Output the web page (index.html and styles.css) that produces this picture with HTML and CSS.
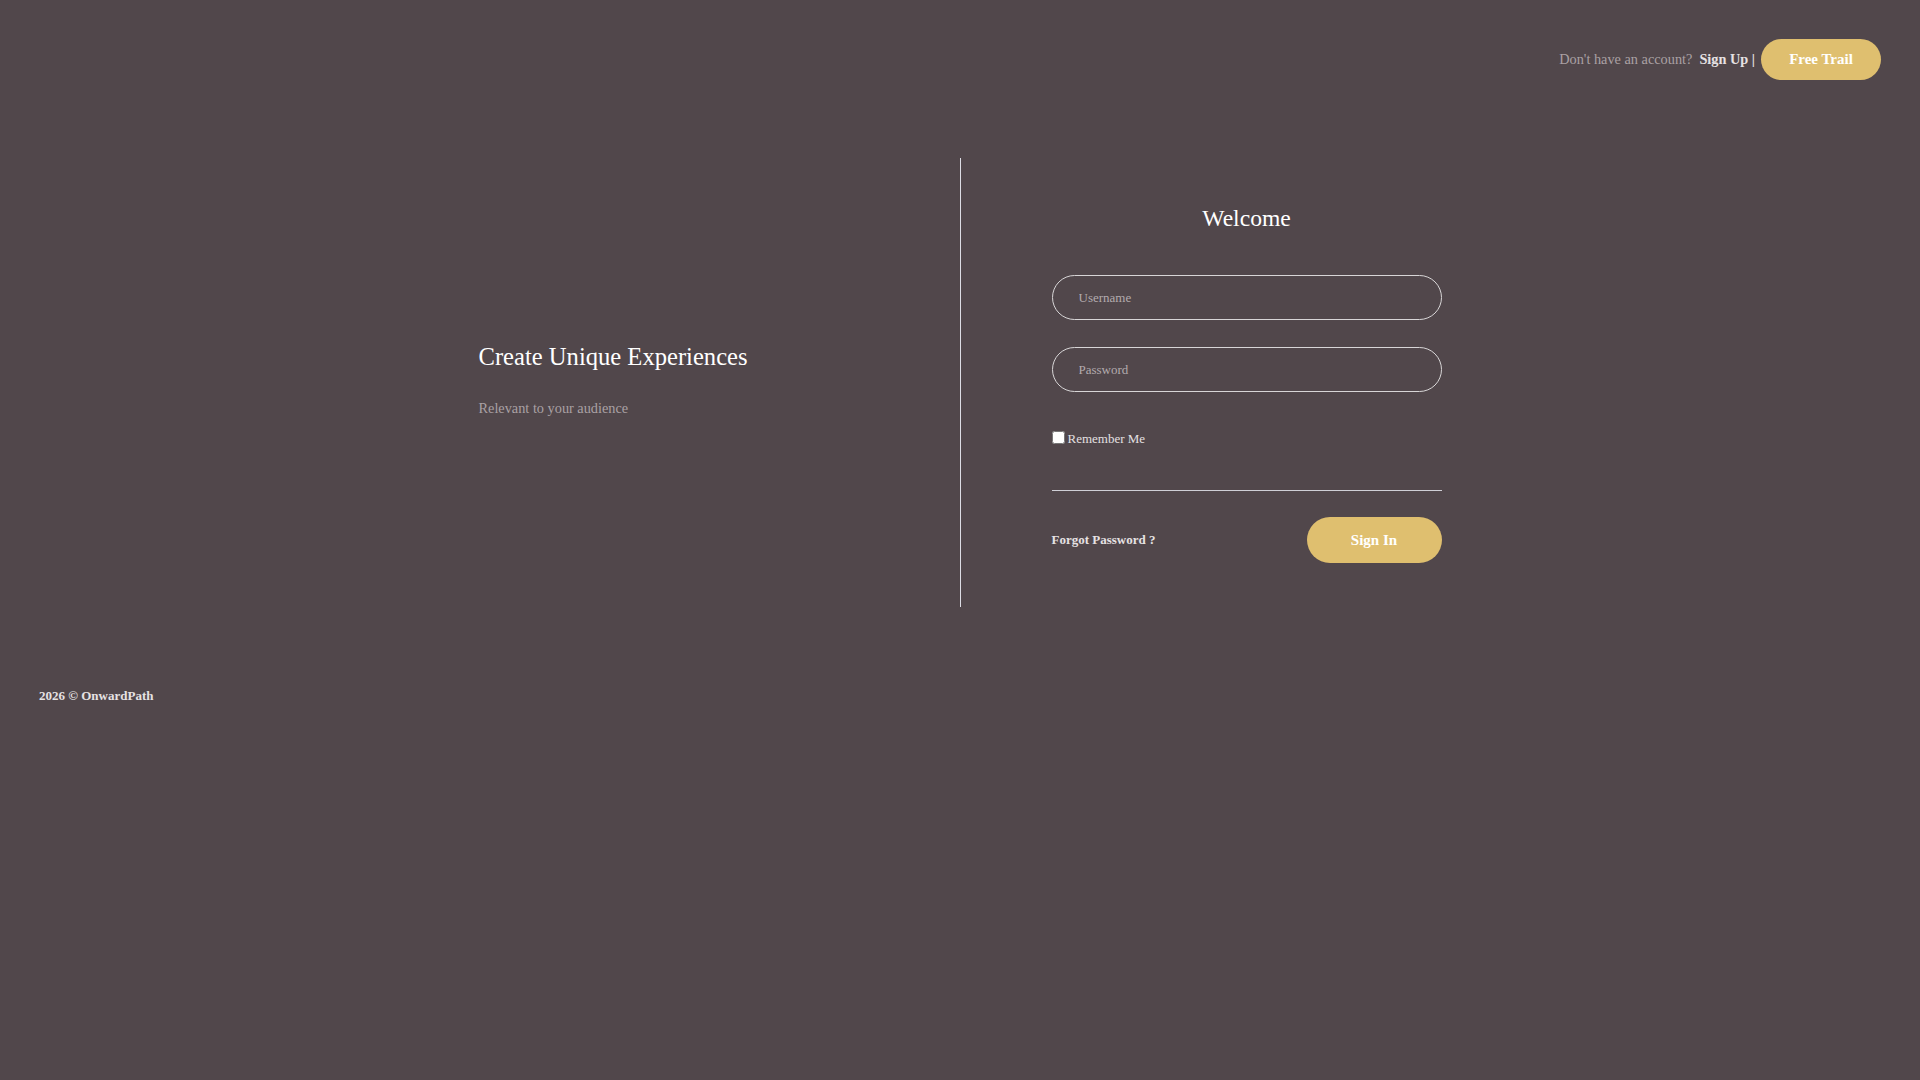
FILE: index.html
```html
<!DOCTYPE html>
<html lang="en">
<head>
    <meta charset="UTF-8">
    <meta name="viewport" content="width=device-width, initial-scale=1.0">
    <title>OnwardPath - Sign In</title>
    <link rel="stylesheet" href="styles.css">
</head>
<body>
    <div class="header">
        <span class="header-text">Don't have an account?</span>
        <a class="header-link" href="#">Sign Up |</a>
        <a class="trial-btn" href="#">Free Trail</a>
    </div>

    <div class="container">
        <div class="intro">
            <h1>Create Unique Experiences</h1>
            <p>Relevant to your audience</p>
        </div>

        <div class="login">
            <h2>Welcome</h2>
            <form class="login-form" onsubmit="return false">
                <input class="field" type="text" placeholder="Username">
                <input class="field" type="password" placeholder="Password">
                <label class="remember">
                    <input type="checkbox">
                    <span>Remember Me</span>
                </label>
                <div class="divider"></div>
                <div class="form-actions">
                    <a class="forgot" href="#">Forgot Password ?</a>
                    <button class="signin-btn" type="submit">Sign In</button>
                </div>
            </form>
        </div>
    </div>

    <div class="footer">2026 &copy; OnwardPath</div>
</body>
</html>
```

FILE: styles.css
```css
:root {
    --bg-color: #51474b;
    --gold: #dfbf6f;
    --line-color: #dcdce4;
    --muted: #aaa1a4;
}

* {
    margin: 0;
    padding: 0;
    box-sizing: border-box;
    font-family: 'Liberation Serif', 'Times New Roman', serif;
}

html, body {
    min-height: 100%;
}

body {
    background-color: var(--bg-color);
    color: white;
    min-height: 1080px;
}

a {
    text-decoration: none;
    color: inherit;
}

.header {
    display: flex;
    justify-content: flex-end;
    align-items: center;
    padding: 39px 39px 0;
    font-size: 14.3px;
}

.header-text {
    color: var(--muted);
    margin-right: 7px;
}

.header-link {
    font-weight: bold;
    color: #e6e2e3;
    margin-right: 6px;
}

.trial-btn {
    display: inline-flex;
    align-items: center;
    justify-content: center;
    width: 120px;
    height: 41px;
    border-radius: 21px;
    background-color: var(--gold);
    color: white;
    font-weight: bold;
    font-size: 15px;
}

.container {
    display: flex;
    width: 963px;
    margin: 78px auto 0;
}

.intro {
    width: 481px;
    display: flex;
    flex-direction: column;
    justify-content: center;
    padding-bottom: 6px;
}

.intro h1 {
    font-size: 24.6px;
    font-weight: normal;
    line-height: 1.15;
}

.intro p {
    font-size: 14.3px;
    line-height: 1.15;
    color: var(--muted);
    margin-top: 29px;
}

.login {
    width: 482px;
    border-left: 1px solid var(--line-color);
    padding: 47px 0 44px 91px;
}

.login h2 {
    font-size: 23.6px;
    font-weight: normal;
    line-height: 1.15;
    text-align: center;
}

.login-form {
    display: flex;
    flex-direction: column;
    margin-top: 43px;
}

.field {
    height: 45px;
    border: 1px solid #d8d6d7;
    border-radius: 23px;
    background: transparent;
    color: white;
    padding: 0 26px;
    font-size: 13px;
    outline: none;
}

.field + .field {
    margin-top: 27px;
}

.field::placeholder {
    color: #b3abae;
}

.remember {
    display: flex;
    align-items: flex-start;
    margin-top: 39px;
    font-size: 13px;
    line-height: 16px;
    color: #e4e0e1;
}

.remember input {
    width: 13px;
    height: 13px;
    margin: 0 3px 0 0;
}

.divider {
    height: 1px;
    background-color: #cfcfd6;
    margin-top: 43px;
}

.form-actions {
    display: flex;
    justify-content: space-between;
    align-items: center;
    margin-top: 26px;
}

.forgot {
    font-size: 13px;
    font-weight: bold;
    color: #e6e2e3;
}

.signin-btn {
    width: 135px;
    height: 46px;
    border: none;
    border-radius: 23px;
    background-color: var(--gold);
    color: white;
    font-size: 15px;
    font-weight: bold;
    cursor: pointer;
}

.footer {
    padding: 81px 39px 0;
    font-size: 13px;
    font-weight: bold;
    color: #e6e2e3;
}
```
